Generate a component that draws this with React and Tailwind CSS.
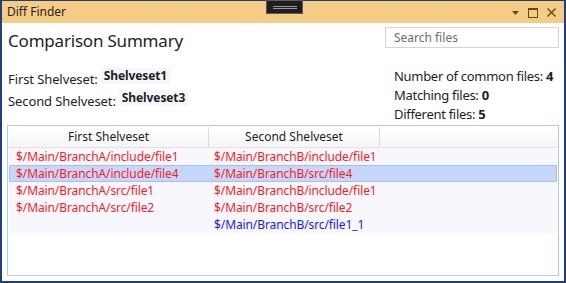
import React from 'react';

const rows = [
  { a: '$/Main/BranchA/include/file1', b: '$/Main/BranchB/include/file1', color: 'text-[#ff1a1a]' },
  { a: '$/Main/BranchA/include/file4', b: '$/Main/BranchB/src/file4', color: 'text-[#ff1a1a]', selected: true },
  { a: '$/Main/BranchA/src/file1', b: '$/Main/BranchB/include/file1', color: 'text-[#ff1a1a]' },
  { a: '$/Main/BranchA/src/file2', b: '$/Main/BranchB/src/file2', color: 'text-[#ff1a1a]' },
  { a: '', b: '$/Main/BranchB/src/file1_1', color: 'text-[#1a1aff]' },
];

const TitleBar = () => (
  <div className="relative flex h-[22px] shrink-0 items-center bg-[#f5cc84] pl-[5px] pr-[8px]">
    <span className="text-[12px] text-[#1e1e1e]">Diff Finder</span>

    {/* drag grip */}
    <div className="absolute left-[264px] top-[-1px] flex h-[14px] w-[37px] flex-col items-center justify-center gap-[1px] border border-[#5a5a5a] bg-[#1e1e1e]">
      <div className="h-px w-[24px] bg-[#9a9a9a]" />
      <div className="h-px w-[24px] bg-[#9a9a9a]" />
    </div>

    <div className="ml-auto flex items-center gap-[9px] pt-[1px]">
      <svg width="7" height="4" viewBox="0 0 7 4">
        <path d="M0 0 H7 L3.5 4 Z" fill="#5c4a1e" />
      </svg>
      <svg width="10" height="10" viewBox="0 0 10 10">
        <rect x="0.5" y="0.5" width="9" height="9" fill="none" stroke="#5c4a1e" />
        <rect x="0" y="0" width="10" height="2" fill="#5c4a1e" />
      </svg>
      <svg width="9" height="9" viewBox="0 0 9 9">
        <path d="M0.5 0.5 L8.5 8.5 M8.5 0.5 L0.5 8.5" stroke="#5c4a1e" strokeWidth="1.4" />
      </svg>
    </div>
  </div>
);

const Grid = () => (
  <div className="ml-[5px] h-[151px] w-[552px] border border-[#abd0e6] bg-white p-px">
    {/* header */}
    <div className="flex h-[21px] border-b border-[#e2e2e2] bg-gradient-to-b from-white to-[#f6f6f6] text-[12px] text-[#1e1e1e]">
      <div className="flex w-[200px] items-center justify-center border-r border-[#dcdcdc]">First Shelveset</div>
      <div className="flex w-[171px] items-center justify-center border-r border-[#dcdcdc]">Second Shelveset</div>
      <div className="flex-1" />
    </div>
    {/* rows */}
    <div className="bg-[#f6f8fe] text-[12px] tracking-[-0.1px]">
      {rows.map((r, i) => (
        <div
          key={i}
          className={
            'flex h-[17px] items-center ' +
            r.color +
            (r.selected ? ' rounded-[1px] border border-[#a8bff0] bg-[#c5d7fb]' : ' border border-transparent')
          }
        >
          <div className="w-[200px] pl-[6px]">{r.a}</div>
          <div className="w-[171px] pl-[4px]">{r.b}</div>
        </div>
      ))}
    </div>
  </div>
);

export default function App() {
  return (
    <div
      className="flex h-[283px] w-[566px] flex-col border-x-2 border-b-2 border-t border-[#203f7c] bg-white"
      style={{ fontFamily: '"Noto Sans", "Open Sans", sans-serif' }}
    >
      <TitleBar />
      <div className="flex flex-1 flex-col">
        <div className="flex">
          {/* left */}
          <div className="flex-1 pl-[6px] pt-[6px] text-[#1e1e1e]">
            <div className="text-[17px] leading-[24px] tracking-[-0.2px]">Comparison Summary</div>
            <div className="mt-[15px] flex items-start text-[13px] leading-[18px] tracking-[-0.1px]">
              <span className="mt-[2px]">First Shelveset:</span>
              <span className="ml-[3px] bg-[#f5f7fb] px-[3px] text-[12px] font-bold leading-[16px]">Shelveset1</span>
            </div>
            <div className="mt-[2px] flex items-start text-[13px] leading-[18px] tracking-[-0.1px]">
              <span className="mt-[2px]">Second Shelveset:</span>
              <span className="ml-[3px] bg-[#f5f7fb] px-[3px] text-[12px] font-bold leading-[16px]">Shelveset3</span>
            </div>
          </div>
          {/* right */}
          <div className="w-[174px] pt-[4px]">
            <div className="flex h-[21px] items-center border border-[#d4d4d4] pl-[8px] text-[12px] text-[#6d6d6d]">
              Search files
            </div>
            <div className="mt-[19px] whitespace-nowrap pl-[9px] text-[13px] leading-[19px] tracking-[-0.3px] text-[#1e1e1e]">
              <div>Number of common files: <b>4</b></div>
              <div>Matching files: <b>0</b></div>
              <div>Different files: <b>5</b></div>
            </div>
          </div>
          <div className="w-[5px]" />
        </div>
        <div className="mt-[1px]">
          <Grid />
        </div>
      </div>
    </div>
  );
}
